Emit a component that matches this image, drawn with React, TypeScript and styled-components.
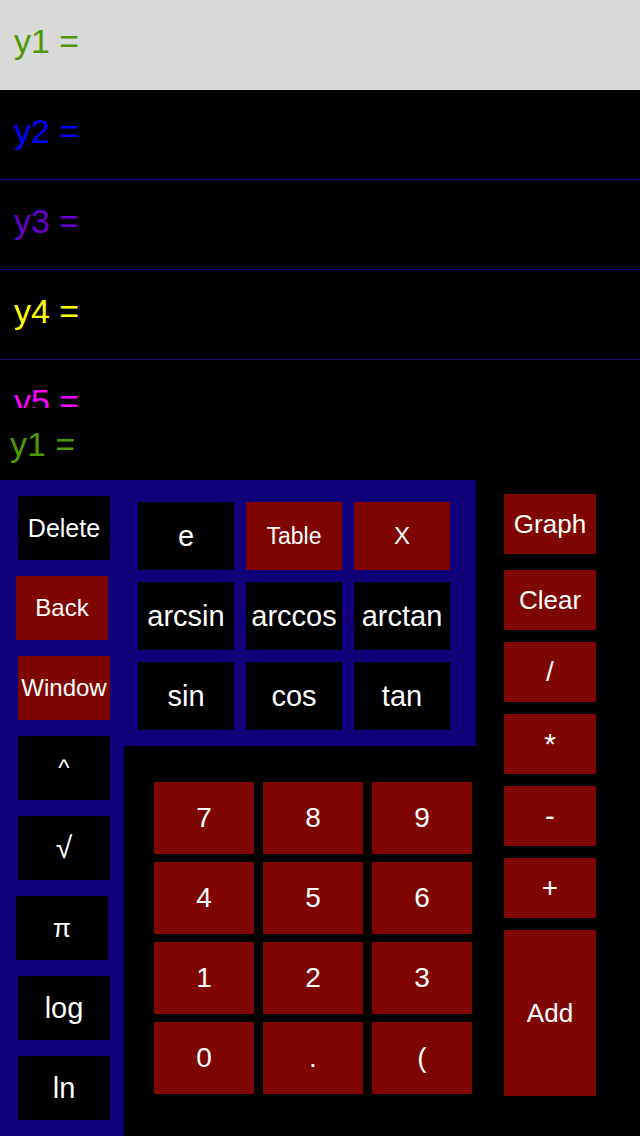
import React from "react";
import styled, { createGlobalStyle } from "styled-components";

const RED = "#7f0600";
const BLUE = "#10007a";

const Global = createGlobalStyle`
  html, body { margin: 0; padding: 0; background: #000; }
  body { font-family: "Liberation Sans", Arial, Helvetica, sans-serif; }
  * { box-sizing: border-box; }
`;

const Screen = styled.div`
  width: 640px;
  height: 1136px;
  background: #000;
  overflow: hidden;
  display: flex;
  flex-direction: column;
`;

const List = styled.div`
  height: 408px;
  overflow: hidden;
  flex-shrink: 0;
`;

const Row = styled.div<{ $active?: boolean }>`
  height: 90px;
  flex-shrink: 0;
  display: flex;
  align-items: center;
  padding: 0 0 6px 14px;
  background: ${(p) => (p.$active ? "#d9d9d9" : "#000")};
  border-bottom: 1px solid ${(p) => (p.$active ? "#d9d9d9" : "#1a0a7a")};
`;

const FnLabel = styled.span<{ $color: string }>`
  font-size: 34px;
  color: ${(p) => p.$color};
  white-space: pre;
`;

const Current = styled.div`
  height: 72px;
  flex-shrink: 0;
  display: flex;
  align-items: center;
  padding-left: 10px;
`;

const Keypad = styled.div`
  flex: 1;
  display: grid;
  grid-template-columns: 124px 352px 164px;
  grid-template-rows: 266px 1fr;
`;

const LeftCol = styled.div`
  grid-column: 1;
  grid-row: 1 / span 2;
  background: ${BLUE};
  display: flex;
  flex-direction: column;
  gap: 16px;
  padding: 16px 0 0 18px;
`;

const FnGrid = styled.div`
  grid-column: 2;
  grid-row: 1;
  background: ${BLUE};
  display: grid;
  grid-template-columns: repeat(3, 96px);
  grid-auto-rows: 68px;
  gap: 12px;
  padding: 22px 0 0 14px;
`;

const NumPad = styled.div`
  grid-column: 2;
  grid-row: 2;
  display: grid;
  grid-template-columns: 100px 100px 100px;
  grid-auto-rows: 72px;
  column-gap: 9px;
  row-gap: 8px;
  padding: 36px 0 0 30px;
  align-content: start;
`;

const RightCol = styled.div`
  grid-column: 3;
  grid-row: 1 / span 2;
  display: flex;
  flex-direction: column;
  gap: 12px;
  padding: 14px 0 0 28px;
`;

const Key = styled.div<{
  $red?: boolean;
  $size?: number;
  $w?: number;
  $h?: number;
  $nudge?: number;
  $after?: number;
}>`
  width: ${(p) => (p.$w ? `${p.$w}px` : "auto")};
  height: ${(p) => (p.$h ? `${p.$h}px` : "auto")};
  flex-shrink: 0;
  margin-left: ${(p) => p.$nudge ?? 0}px;
  margin-bottom: ${(p) => p.$after ?? 0}px;
  background: ${(p) => (p.$red ? RED : "#000")};
  color: #fff;
  font-size: ${(p) => p.$size ?? 26}px;
  display: flex;
  align-items: center;
  justify-content: center;
  white-space: nowrap;
  overflow: hidden;
`;

const rows = [
  { label: "y1 =", color: "#4c9900", active: true },
  { label: "y2 =", color: "#0000ff" },
  { label: "y3 =", color: "#6600cc" },
  { label: "y4 =", color: "#ffff00" },
  { label: "y5 =", color: "#ff00ff" },
];

const leftKeys: { t: string; red?: boolean; size?: number; nudge?: number }[] = [
  { t: "Delete", size: 25 },
  { t: "Back", red: true, size: 24, nudge: -2 },
  { t: "Window", red: true, size: 24 },
  { t: "^", size: 24 },
  { t: "√", size: 30 },
  { t: "π", size: 26, nudge: -2 },
  { t: "log", size: 29 },
  { t: "ln", size: 29 },
];

const fnKeys: { t: string; red?: boolean; size?: number }[] = [
  { t: "e", size: 29 },
  { t: "Table", red: true, size: 23 },
  { t: "X", red: true, size: 24 },
  { t: "arcsin", size: 29 },
  { t: "arccos", size: 29 },
  { t: "arctan", size: 29 },
  { t: "sin", size: 29 },
  { t: "cos", size: 29 },
  { t: "tan", size: 29 },
];

const numKeys = ["7", "8", "9", "4", "5", "6", "1", "2", "3", "0", ".", "("];

export default function App() {
  return (
    <>
      <Global />
      <Screen>
        <List>
          {rows.map((r) => (
            <Row key={r.label} $active={r.active}>
              <FnLabel $color={r.color}>{r.label}</FnLabel>
            </Row>
          ))}
        </List>
        <Current>
          <FnLabel $color="#4c9900">y1 =</FnLabel>
        </Current>
        <Keypad>
          <LeftCol>
            {leftKeys.map((k) => (
              <Key key={k.t} $red={k.red} $size={k.size} $w={92} $h={64} $nudge={k.nudge}>
                {k.t}
              </Key>
            ))}
          </LeftCol>
          <FnGrid>
            {fnKeys.map((k) => (
              <Key key={k.t} $red={k.red} $size={k.size}>
                {k.t}
              </Key>
            ))}
          </FnGrid>
          <NumPad>
            {numKeys.map((n) => (
              <Key key={n} $red $size={28}>
                {n}
              </Key>
            ))}
          </NumPad>
          <RightCol>
            <Key $red $w={92} $h={60} $after={4}>Graph</Key>
            <Key $red $w={92} $h={60}>Clear</Key>
            <Key $red $w={92} $h={60} $size={28}>/</Key>
            <Key $red $w={92} $h={60} $size={30}>*</Key>
            <Key $red $w={92} $h={60} $size={30}>-</Key>
            <Key $red $w={92} $h={60} $size={28}>+</Key>
            <Key $red $w={92} $h={166}>Add</Key>
          </RightCol>
        </Keypad>
      </Screen>
    </>
  );
}
